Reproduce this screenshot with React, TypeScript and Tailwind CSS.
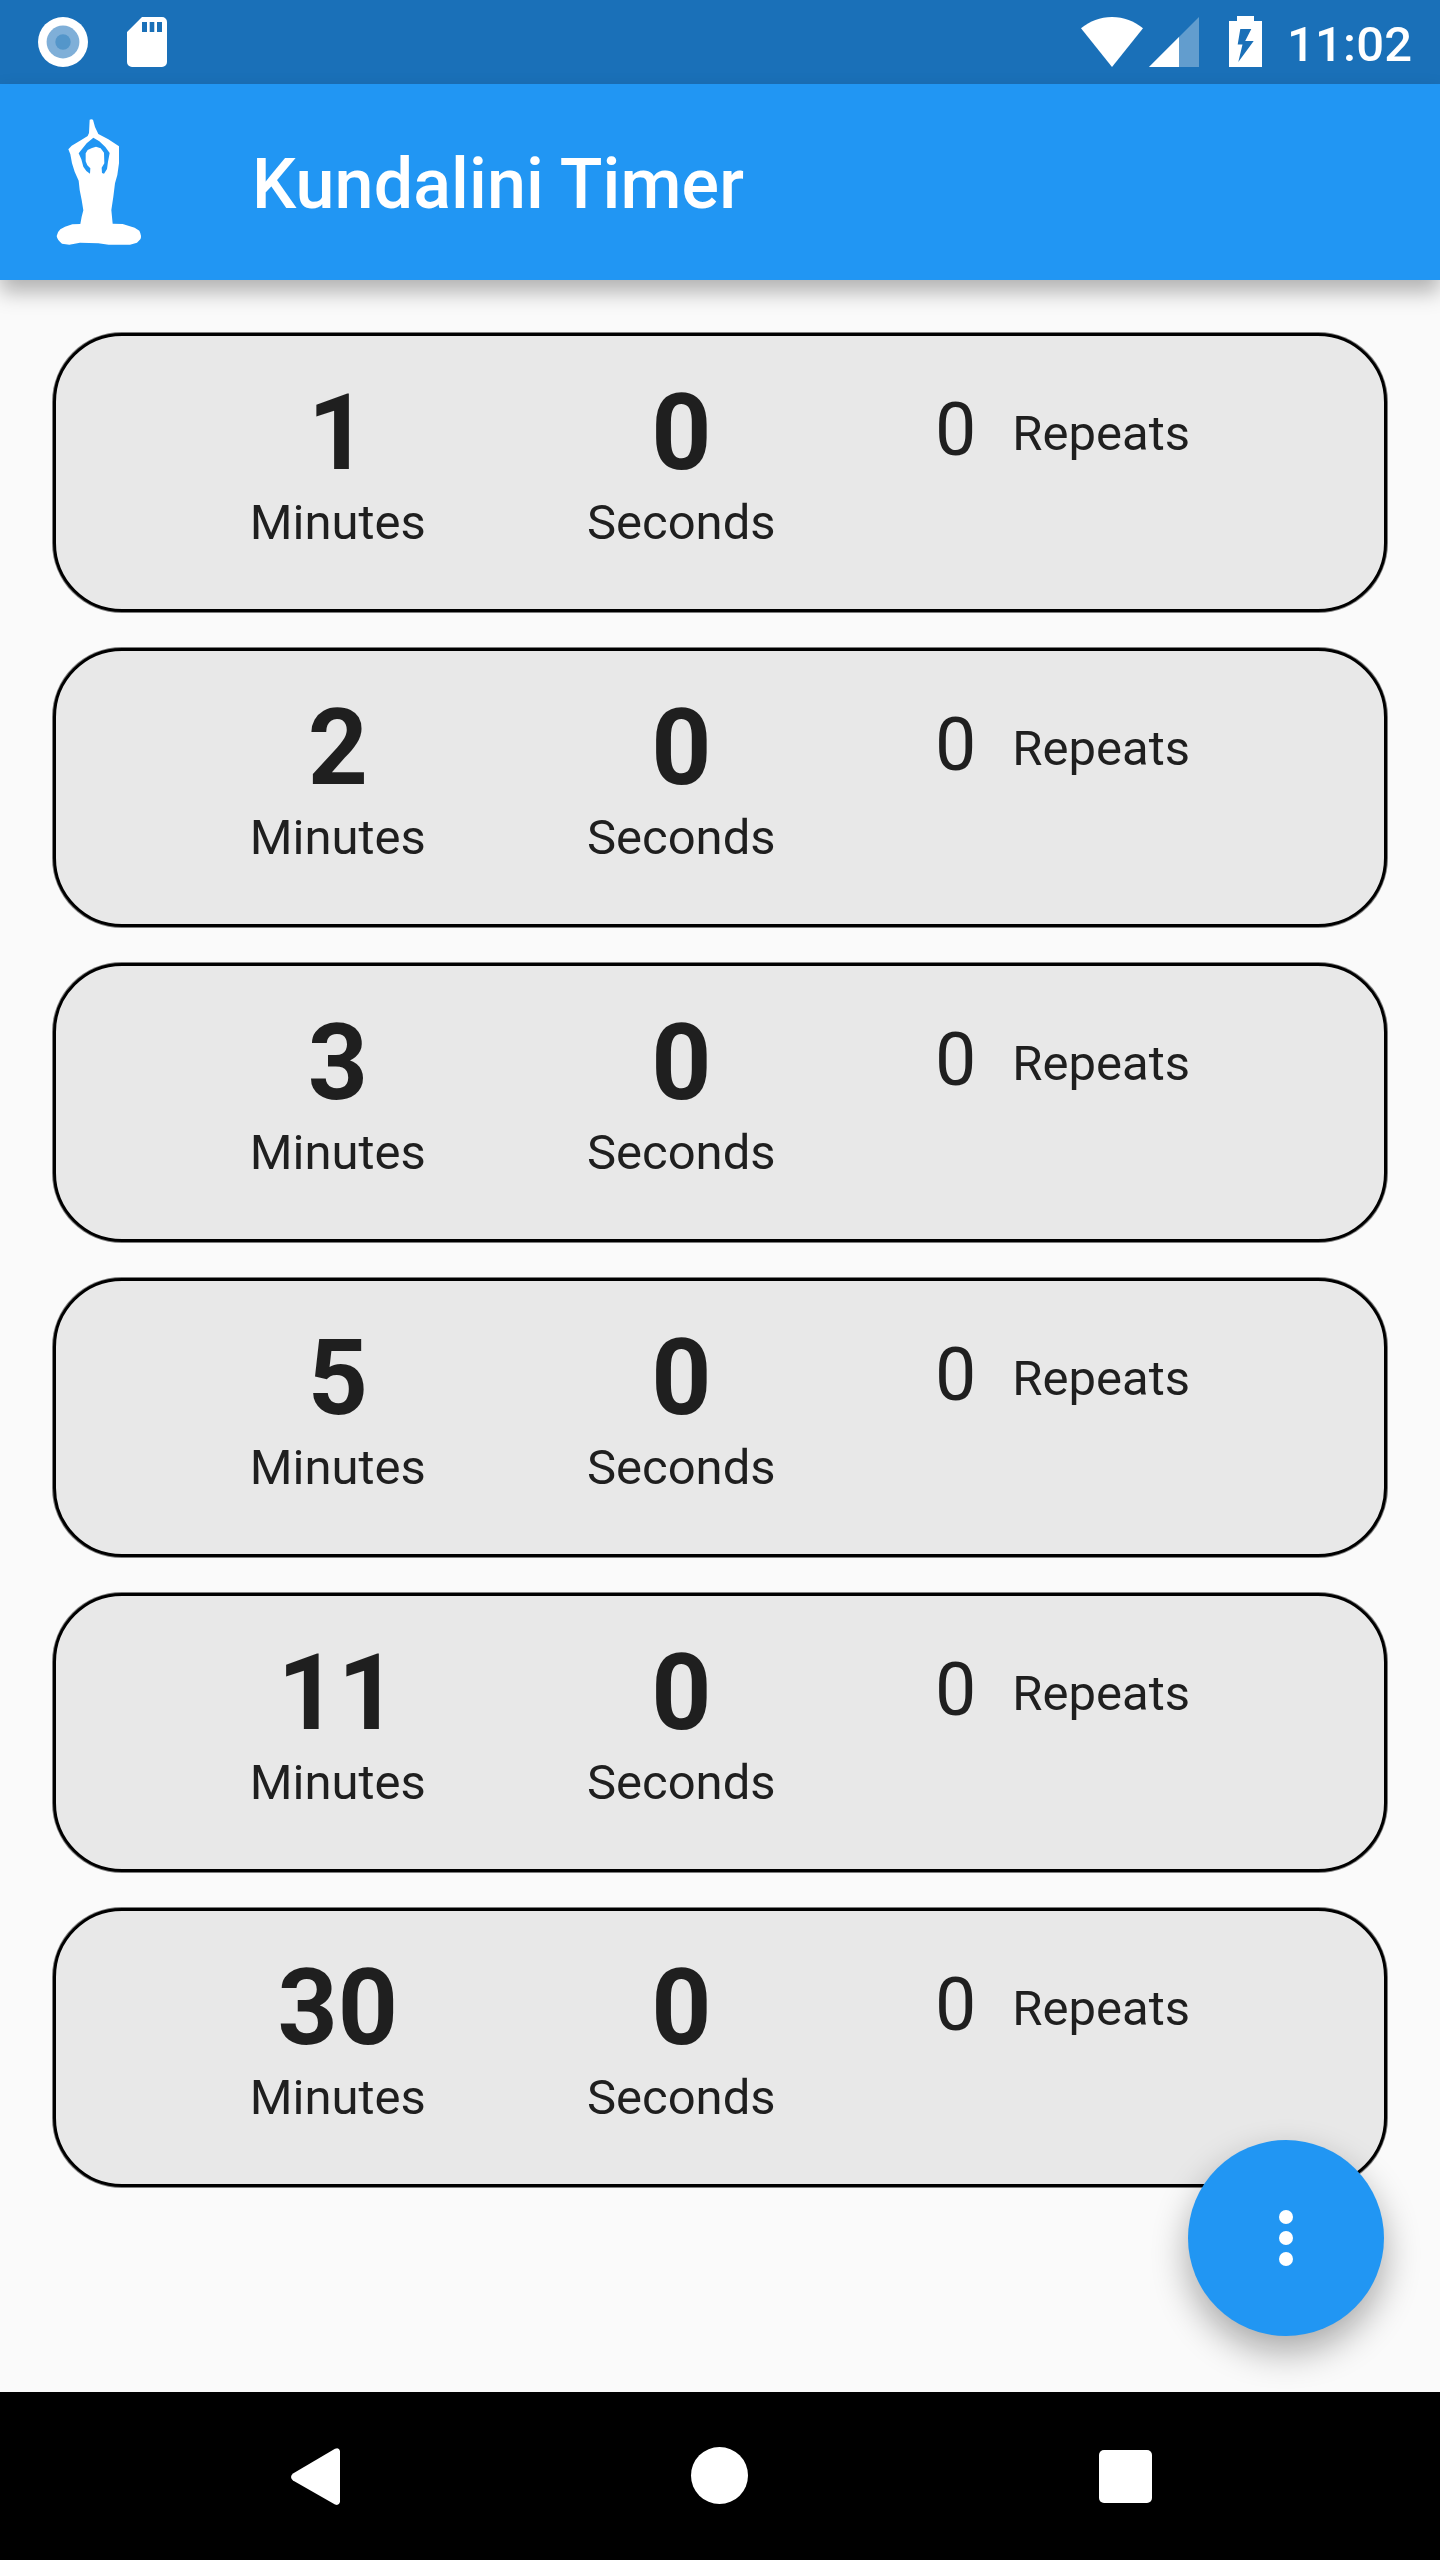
const minutes = [1, 2, 3, 5, 11, 30];

function StatusBar() {
  return (
    <div className="flex h-[84px] items-start bg-[#1a70b8] text-white">
      <svg className="mt-[17px] ml-[38px] h-[50px] w-[50px]" viewBox="0 0 50 50">
        <circle cx="25" cy="25" r="25" fill="#fff" />
        <circle cx="25" cy="25" r="16.4" fill="#7fafd8" />
        <circle cx="25" cy="25" r="7.7" fill="#5496ca" />
      </svg>
      <svg className="mt-[17px] ml-[39px] h-[50px] w-[40px]" viewBox="0 0 40 50">
        <path
          fill="#fff"
          fillRule="evenodd"
          d="M15 0H35a5 5 0 0 1 5 5V45a5 5 0 0 1-5 5H5a5 5 0 0 1-5-5V15ZM15 5V15H20V5ZM22.7 5V15H27.3V5ZM30 5V15H35V5Z"
        />
      </svg>
      <svg className="mt-[17px] ml-[914px] h-[50px] w-[62px]" viewBox="0 0 62 50">
        <path d="M31 50 0 11.3C9 4 19 0 31 0S53 4 62 11.3Z" fill="#fff" />
      </svg>
      <svg className="mt-[17px] ml-[6px] h-[50px] w-[50px]" viewBox="0 0 50 50">
        <path d="M50 0V50H0Z" fill="#629dce" />
        <path d="M30 20V50H0Z" fill="#fff" />
      </svg>
      <svg className="mt-[16px] ml-[30px] h-[51px] w-[33px]" viewBox="0 0 33 51">
        <path
          fill="#fff"
          fillRule="evenodd"
          d="M8 0H25V5H33V51H0V5H8ZM11.3 13 8.7 28.5H13.5L9.3 46 24.7 25H16.2L22.3 13Z"
        />
      </svg>
      <span className="mt-[16px] ml-[25px] text-[49px] leading-[58px] font-medium tracking-[0.2px]">11:02</span>
    </div>
  );
}

function YogaFigure() {
  return (
    <svg className="mt-[16px] ml-[30px] h-[160px] w-[140px]" viewBox="0 0 420 480">
      <path
        fill="#fff"
        fillRule="evenodd"
        d="M179 59Q184 57 189 59L195 81 205 102 235 118 267 139 267 190 262 225 255 250 250 290 244 330 248 371 278 372 314 383 328 392Q336 408 331 418L321 428 300 434 236 434 205 430 150 428 118 434 96 431Q82 420 80 408 82 396 91 388L105 380 127 373 151 372 155 350 160 331 155 300 149 270 146 242 134 215 126 190 121 163 115 148 125 137 155 119 173 108 177 99ZM190 113 170 130 146 160 154 178 160 200 169 213 180 221 181 205 172 196 167 184 167 160 173 150 186 144 198 140 212 145 222 158 223 190 215 203 216 219 222 221 231 207 234 185 239 159 226 141 208 124Z"
      />
    </svg>
  );
}

function TimerCard({ value }: { value: number }) {
  return (
    <div className="flex h-[279px] items-start rounded-[69px] border-[3px] border-black bg-[#e8e8e8] pt-[38px] pl-[110px] shadow-[0_0_0_1px_rgba(0,0,0,0.5)]">
      <TimeUnit value={value} label="Minutes" />
      <TimeUnit value={0} label="Seconds" />
      <div className="flex items-start pl-[82px]">
        <span className="mt-[13px] text-[73.5px] leading-[86px]">0</span>
        <span className="mt-[31px] ml-[36px] text-[49px] leading-[57px]">Repeats</span>
      </div>
    </div>
  );
}

function TimeUnit({ value, label }: { value: number; label: string }) {
  return (
    <div className="flex w-[343.5px] flex-col items-center">
      <span className="text-[105px] leading-[120px] font-bold">{value}</span>
      <span className="text-[49px] leading-[57px]">{label}</span>
    </div>
  );
}

export default function App() {
  return (
    <div className="relative flex h-[2560px] w-[1440px] flex-col overflow-hidden bg-[#fafafa] font-['Roboto',sans-serif] text-[#1f1f1f]">
      <StatusBar />
      <header className="flex h-[196px] items-start bg-[#2196f3] text-white shadow-[0_12px_20px_0_rgba(0,0,0,0.29)]">
        <YogaFigure />
        <h1 className="mt-[59px] ml-[82px] text-[70px] leading-[82px] font-medium tracking-[0.1px]">Kundalini Timer</h1>
      </header>
      <main className="flex grow flex-col gap-[36px] px-[53px] pt-[53px]">
        {minutes.map((m) => (
          <TimerCard key={m} value={m} />
        ))}
      </main>
      <button
        aria-label="More"
        className="absolute top-[2140px] left-[1188px] flex h-[196px] w-[196px] flex-col items-center justify-center gap-[7px] rounded-full bg-[#2196f3] shadow-[0_16px_36px_0_rgba(0,0,0,0.33)]"
      >
        <span className="h-[14px] w-[14px] rounded-full bg-white" />
        <span className="h-[14px] w-[14px] rounded-full bg-white" />
        <span className="h-[14px] w-[14px] rounded-full bg-white" />
      </button>
      <nav className="relative flex h-[168px] items-start bg-black">
        <svg className="mt-[56px] ml-[290px] h-[58px] w-[50px]" viewBox="0 0 50 58">
          <path d="M50 3V54Q49 58 45 56.5L3 32.5Q-1 29 3 25.5L45 .8Q49-1 50 3Z" fill="#fff" />
        </svg>
        <span className="mt-[55px] ml-[351px] h-[57px] w-[57px] rounded-full bg-white" />
        <span className="mt-[58px] ml-[351px] h-[53px] w-[53px] rounded-[5px] bg-white" />
      </nav>
    </div>
  );
}
